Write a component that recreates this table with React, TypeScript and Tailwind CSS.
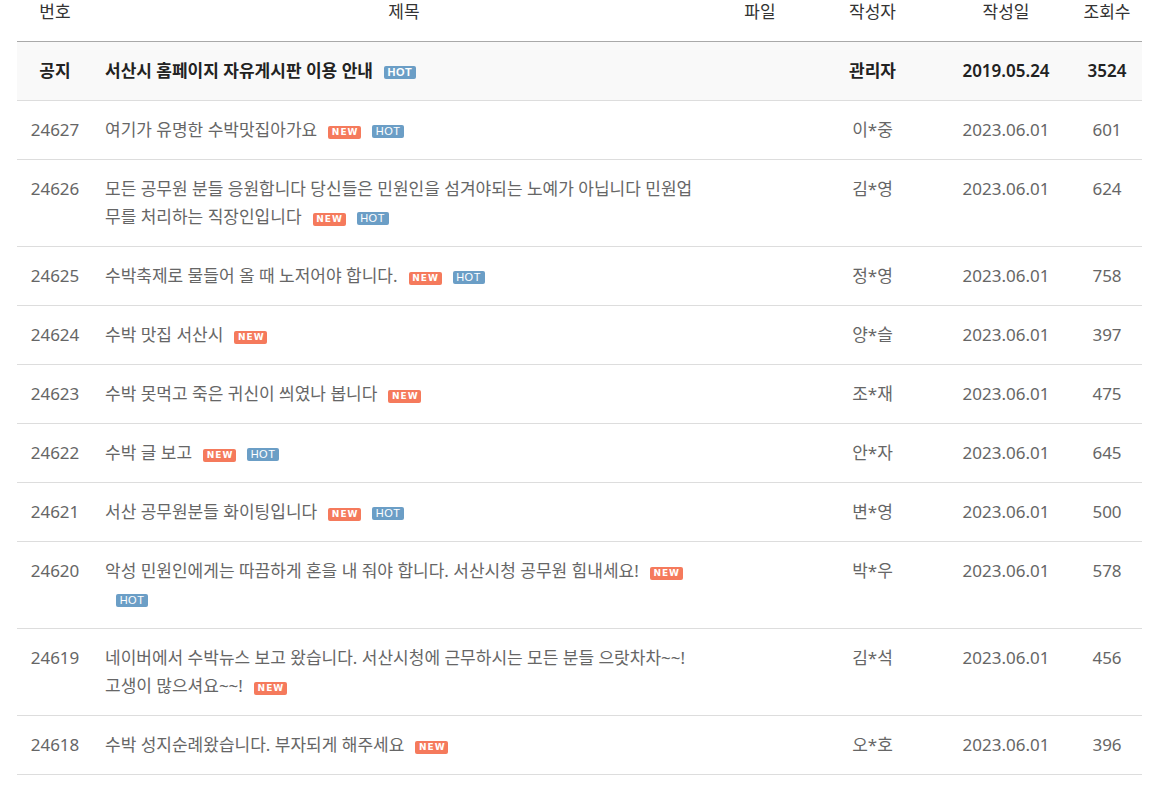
import React from 'react';

type Post = {
  no: string;
  title: string;
  isNew?: boolean;
  hot?: boolean;
  author: string;
  date: string;
  views: string;
  notice?: boolean;
};

const posts: Post[] = [
  { no: '공지', title: '서산시 홈페이지 자유게시판 이용 안내', hot: true, author: '관리자', date: '2019.05.24', views: '3524', notice: true },
  { no: '24627', title: '여기가 유명한 수박맛집아가요', isNew: true, hot: true, author: '이*중', date: '2023.06.01', views: '601' },
  { no: '24626', title: '모든 공무원 분들 응원합니다 당신들은 민원인을 섬겨야되는 노예가 아닙니다 민원업무를 처리하는 직장인입니다', isNew: true, hot: true, author: '김*영', date: '2023.06.01', views: '624' },
  { no: '24625', title: '수박축제로 물들어 올 때 노저어야 합니다.', isNew: true, hot: true, author: '정*영', date: '2023.06.01', views: '758' },
  { no: '24624', title: '수박 맛집 서산시', isNew: true, author: '양*슬', date: '2023.06.01', views: '397' },
  { no: '24623', title: '수박 못먹고 죽은 귀신이 씌였나 봅니다', isNew: true, author: '조*재', date: '2023.06.01', views: '475' },
  { no: '24622', title: '수박 글 보고', isNew: true, hot: true, author: '안*자', date: '2023.06.01', views: '645' },
  { no: '24621', title: '서산 공무원분들 화이팅입니다', isNew: true, hot: true, author: '변*영', date: '2023.06.01', views: '500' },
  { no: '24620', title: '악성 민원인에게는 따끔하게 혼을 내 줘야 합니다. 서산시청 공무원 힘내세요!', isNew: true, hot: true, author: '박*우', date: '2023.06.01', views: '578' },
  { no: '24619', title: '네이버에서 수박뉴스 보고 왔습니다. 서산시청에 근무하시는 모든 분들 으랏차차~~! 고생이 많으셔요~~!', isNew: true, author: '김*석', date: '2023.06.01', views: '456' },
  { no: '24618', title: '수박 성지순례왔습니다. 부자되게 해주세요', isNew: true, author: '오*호', date: '2023.06.01', views: '396' },
];

const cols = 'grid grid-cols-[76px_622px_90px_135px_132px_70px]';

function NewBadge() {
  return (
    <span className="inline-flex items-center justify-center w-[33px] h-[13px] ml-[11px] rounded-[2px] bg-[#f57a5c] text-white text-[9px] font-bold leading-none tracking-[1px] pl-[1px] align-[1px] font-['DejaVu_Sans',sans-serif]">
      NEW
    </span>
  );
}

function HotBadge() {
  return (
    <span className="inline-flex items-center justify-center w-[32px] h-[13px] ml-[11px] rounded-[2px] bg-[#6b9ec6] text-white text-[11px] leading-none tracking-[0.5px] align-[1px] font-['Liberation_Sans',sans-serif]">
      HOT
    </span>
  );
}

export default function App() {
  return (
    <div className="w-[1174px] h-[790px] bg-white overflow-hidden font-['Noto_Sans','Noto_Sans_CJK_KR',sans-serif]">
      <div className="mx-[17px] w-[1125px]">
        <div className={`${cols} h-[42px] border-b border-[#a9a9a9] text-[17px] leading-[24px] text-[#333] text-center`}>
          <div>번호</div>
          <div>제목</div>
          <div>파일</div>
          <div>작성자</div>
          <div>작성일</div>
          <div>조회수</div>
        </div>
        {posts.map((p) => (
          <div
            key={p.no}
            className={`${cols} border-b border-[#dddddd] text-[17px] leading-[28px] ${
              p.notice ? 'bg-[#f9f9f9] text-[#222] font-semibold' : 'text-[#666]'
            }`}
          >
            <div className="text-center pt-[15px] pb-[15px]">{p.no}</div>
            <div className="px-[12px] pt-[15px] pb-[15px] break-all">
              {p.title}
              {p.isNew && <NewBadge />}
              {p.hot && <HotBadge />}
            </div>
            <div className="pt-[15px]" />
            <div className="text-center pt-[15px]">{p.author}</div>
            <div className="text-center pt-[15px]">{p.date}</div>
            <div className="text-center pt-[15px]">{p.views}</div>
          </div>
        ))}
      </div>
    </div>
  );
}
